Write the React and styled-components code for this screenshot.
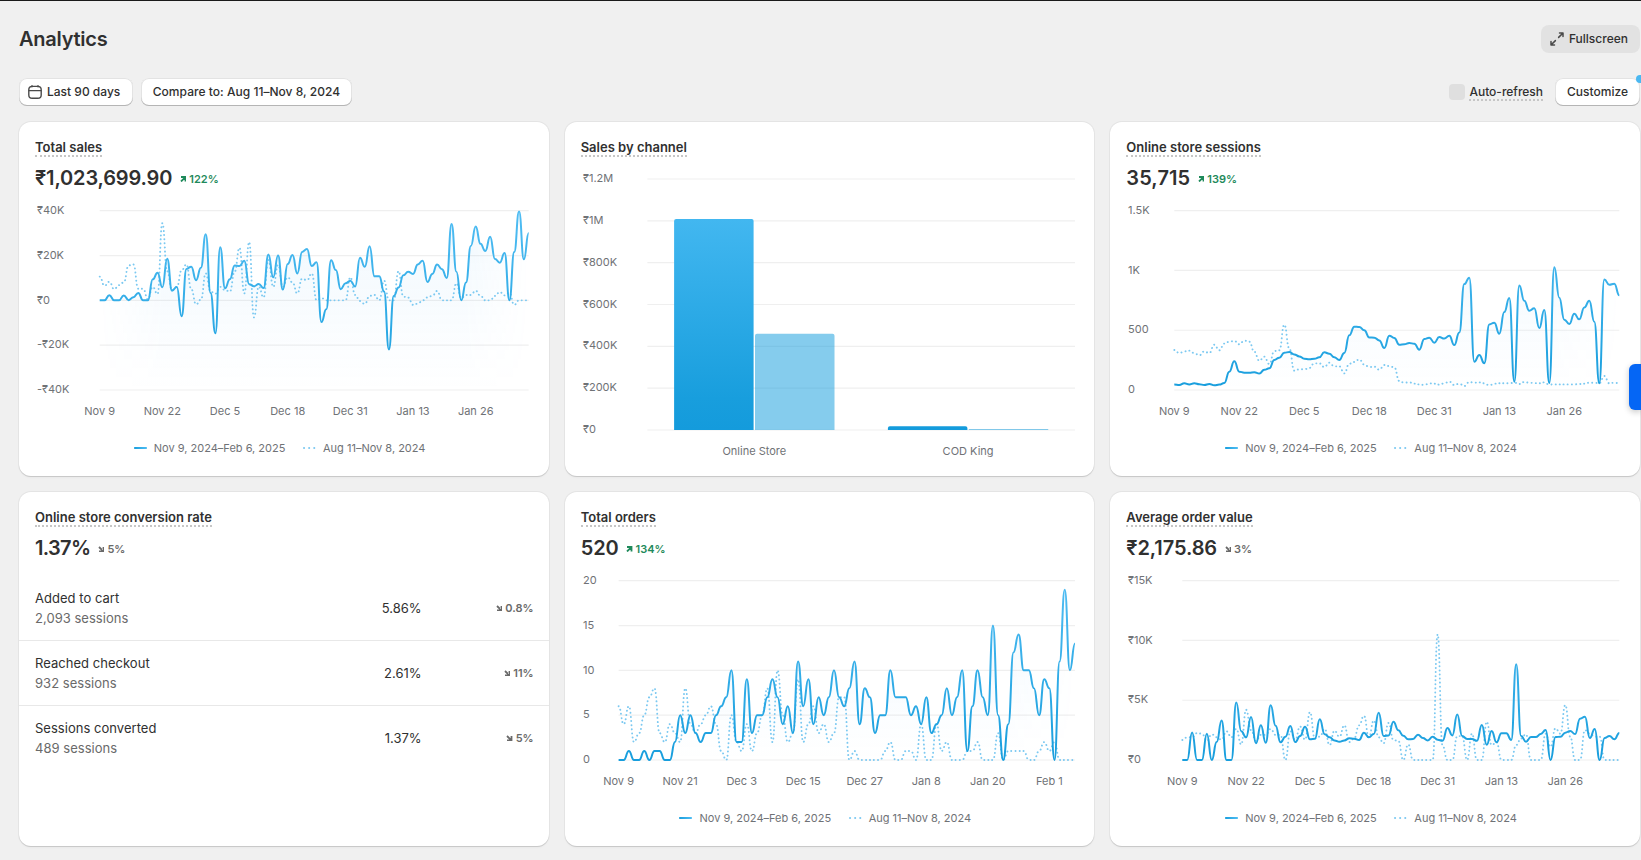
import React, { useId } from "react";
import styled, { createGlobalStyle } from "styled-components";

const GlobalStyle = createGlobalStyle`
  *, *::before, *::after { box-sizing: border-box; }
  body {
    margin: 0;
    background: #f0f0f0;
    color: #303030;
    font-family: Inter, "Liberation Sans", sans-serif;
    font-size: 13px;
    overflow: hidden;
  }
`;

/* ---------- data ---------- */

const SALES = [
  0, 0, 2.3, 0, 0, 2.2, 0.1, 1.4, 3.3, 0, 0, 9.4, 12.3, 5.8, 18.6, 4.3, 6, -7.1, 14, 15,
  9, 14.6, 29.5, 3.3, -14.7, 23.7, 5.4, 9.4, 15.6, 15.3, 17.7, 7.2, 6.3, 7.3, 5.5, 20.5, 10.3, 20, 4.8, 16.2,
  20.2, 12, 21.6, 22.9, 15.3, 17, -9.7, -4, 17.9, 13.5, 5, 7.6, 8.8, 6.2, 19, 15, 24.1, 10.7, 10.7, 3.9,
  -21.9, 1.9, 5.7, 11.2, 12.8, 11.8, 16, 17.7, 8.2, 11.8, 16, 13.9, 10, 34.1, 12.8, 0, 8, 24.3, 32.9, 25.2,
  22, 28.4, 18.5, 16.8, 21.1, 0, 21.6, 39.6, 18.3, 30,
];
const SALES_PREV = [
  10.6, 6.5, 8.3, 5, 6.8, 8, 15.6, 16, 5.2, 5.2, 0.5, 6, 2.8, 34.4, 13, 4.6, 6, 13.5, 16, 5,
  -1.8, 0.3, 12, 3.9, 3, 6, 4.6, 3.9, 12.8, 23.4, 3.1, 26, -7.6, 6.1, 1.3, 18, 6, 15.8, 6, 10.3,
  8, 3.1, 9.7, 9, 12, 0, 1, 0, 0, 0, 0, 0, 10.3, 2.4, -0.3, -1.6, 2, 2.4, 0, 8.8,
  0, 0, 13, 1.6, 1.2, -2, -1.5, 0, 1.3, 2, 4.2, 0, 0, 0, 7.6, 1, 2.4, 2.4, 4.3, 2,
  0, 0, 2, 3.7, 2.2, 3.4, -2, 0, 0, 0,
];
const SESSIONS = [
  45, 42, 56, 47, 56, 48, 42, 50, 39, 45, 58, 153, 240, 153, 145, 145, 148, 137, 170, 181,
  251, 270, 312, 318, 298, 281, 262, 257, 262, 273, 315, 304, 273, 251, 310, 457, 530, 527, 499, 440,
  438, 415, 351, 454, 435, 379, 382, 393, 387, 337, 427, 438, 396, 443, 430, 454, 376, 482, 886, 940,
  237, 293, 223, 549, 563, 471, 652, 770, 70, 875, 747, 663, 683, 518, 669, 58, 1026, 772, 588, 552,
  638, 591, 691, 747, 571, 56, 925, 881, 889, 792,
];
const SESSIONS_PREV = [
  335, 309, 323, 329, 309, 290, 323, 309, 379, 332, 388, 404, 410, 382, 413, 404, 320, 245, 279, 217,
  326, 332, 546, 348, 162, 173, 173, 184, 223, 223, 192, 229, 198, 198, 139, 220, 234, 256, 212, 192,
  195, 170, 209, 200, 190, 75, 61, 64, 53, 47, 42, 56, 53, 45, 56, 70, 42, 53, 33, 67,
  61, 64, 56, 39, 53, 56, 56, 56, 61, 50, 67, 61, 58, 56, 64, 45, 47, 47, 47, 47,
  47, 50, 53, 61, 61, 56, 117, 56, 61, 56,
];
const ORDERS = [
  0, 0, 1, 0, 0, 1, 0, 1, 1, 0, 0, 2, 5, 3, 5, 3, 2, 3, 3, 5,
  6, 7, 10, 2, 2, 9, 3, 5, 5, 7, 9, 7, 4, 6, 3, 11, 6, 9, 4, 7,
  5, 7, 10, 7, 6, 8, 11, 4, 8, 7, 3, 5, 5, 10, 7, 7, 7, 5, 6, 4,
  7, 3, 4, 5, 8, 5, 7, 10, 1, 6, 10, 7, 5, 15, 5, 0, 4, 12, 14, 10,
  10, 8, 5, 9, 8, 0, 11, 19, 10, 13,
];
const ORDERS_PREV = [
  6, 4, 6, 2, 3, 5, 7, 8, 3, 2, 4, 3, 2, 8, 4, 3, 4, 5, 6, 4,
  1, 0, 5, 2, 1, 4, 1, 3, 5, 8, 2, 10, 5, 2, 3, 9, 2, 4, 6, 3,
  4, 2, 3, 7, 7, 0, 1, 0, 0, 0, 0, 0, 1, 2, 0, 0, 1, 1, 0, 4,
  0, 0, 4, 1, 2, 0, 0, 0, 1, 1, 2, 0, 0, 0, 3, 0, 1, 1, 1, 1,
  0, 0, 1, 2, 1, 2, 0, 0, 0, 0,
];
const AOV = [
  0, 0, 2.3, 0, 0, 2.2, 0, 1.5, 3.3, 0, 0, 4.8, 2.4, 1.9, 3.6, 1.4, 2.9, 1.45, 4.57, 2.87,
  1.48, 1.95, 2.84, 1.5, 2, 2.79, 1.73, 1.78, 3.4, 2.15, 1.9, 1.64, 1.53, 1.64, 1.81, 1.78, 1.67, 2.29, 1.9, 2.17,
  3.96, 2, 2.06, 3.2, 2.48, 2.03, 1.73, 1.76, 2.12, 1.84, 1.64, 1.95, 1.7, 1.6, 2.68, 2.06, 3.8, 2, 1.76, 1.76,
  1.6, 2.93, 1.28, 2.43, 1.48, 2.23, 2.23, 1.67, 8, 2, 1.53, 1.92, 1.92, 2.17, 2.5, 0, 1.92, 1.95, 2.29, 2.43,
  2.17, 3.46, 3.62, 1.84, 2.6, 0, 1.84, 2, 1.73, 2.26,
];
const AOV_PREV = [
  1.67, 1.9, 1.9, 2.25, 2.2, 1.6, 2.15, 1.9, 1.7, 2.4, 1.9, 2.6, 1.3, 4.2, 2.5, 1.6, 2.1, 2.1, 2.6, 2.1,
  2.1, 0, 2.4, 1.7, 2.8, 1.7, 4, 1.8, 1.95, 2.6, 1.25, 2.45, 1.95, 2.9, 1.5, 1.8, 2.9, 3.7, 1.9, 3.3,
  1.9, 1.4, 3.1, 1.67, 1.6, 0, 1.3, 0, 0, 0, 0, 0, 10.5, 1.2, 0, 0, 2, 2, 0, 2.2,
  0, 0, 3.2, 1.25, 1.5, 0, 0, 0, 1.25, 1.8, 2.15, 0, 0, 0, 2.2, 1.1, 2.65, 2.2, 4.6, 1.95,
  0, 0, 2.5, 2.2, 1.95, 1.95, 0, 0, 0, 0,
];

const THIRTEEN_DAYS = ["Nov 9", "Nov 22", "Dec 5", "Dec 18", "Dec 31", "Jan 13", "Jan 26"];
const TWELVE_DAYS = ["Nov 9", "Nov 21", "Dec 3", "Dec 15", "Dec 27", "Jan 8", "Jan 20", "Feb 1"];

const FUNNEL = [
  { name: "Added to cart", sessions: "2,093 sessions", rate: "5.86%", change: "0.8%" },
  { name: "Reached checkout", sessions: "932 sessions", rate: "2.61%", change: "11%" },
  { name: "Sessions converted", sessions: "489 sessions", rate: "1.37%", change: "5%" },
];

/* ---------- page ---------- */

const Page = styled.div`
  height: 860px;
  border-top: 1px solid #1a1a1a;
  padding: 24px 1px 0 19px;
  overflow: hidden;
`;

const Header = styled.header`
  display: flex;
  align-items: center;
  justify-content: space-between;
  height: 28px;
`;

const PageTitle = styled.h1`
  margin: 0;
  font-size: 20px;
  line-height: 28px;
  font-weight: 630;
  letter-spacing: -0.25px;
`;

const Toolbar = styled.div`
  display: flex;
  align-items: center;
  justify-content: space-between;
  margin-top: 25px;
  height: 28px;
`;

const Group = styled.div`
  display: flex;
  align-items: center;
  gap: ${(p) => p.$gap}px;
`;

const Button = styled.button`
  position: relative;
  display: flex;
  align-items: center;
  gap: ${(p) => p.$gap || 0}px;
  height: 28px;
  margin: 0;
  padding: ${(p) => p.$padding || "0 12px"};
  border: 0;
  border-radius: 8px;
  background: ${(p) => (p.$muted ? "#e2e2e2" : "#fff")};
  box-shadow: ${(p) =>
    p.$muted ? "none" : "inset 0 -1px 0 #b5b5b5, inset 0 0 0 1px #e3e3e3"};
  color: #303030;
  font: 550 12px/16px Inter, "Liberation Sans", sans-serif;
  letter-spacing: ${(p) => p.$tracking || 0}px;
  white-space: nowrap;
`;

const Dot = styled.span`
  position: absolute;
  top: -3px;
  right: -4px;
  width: 8px;
  height: 8px;
  border-radius: 50%;
  background: #4ab8f1;
`;

const Checkbox = styled.span`
  width: 16px;
  height: 16px;
  border-radius: 4px;
  background: #dfdfdf;
`;

const DottedLabel = styled.span`
  border-bottom: 2px dotted #c6c6c6;
  font-size: ${(p) => p.$size || 13}px;
  font-weight: ${(p) => p.$weight || 450};
  line-height: 15px;
`;

const Grid = styled.main`
  display: grid;
  grid-template-columns: repeat(3, 1fr);
  grid-auto-rows: 354px;
  gap: 16px;
  margin-top: 16px;
`;

const Card = styled.section`
  display: flex;
  flex-direction: column;
  min-width: 0;
  border-radius: 12px;
  background: #fff;
  box-shadow: 0 1px 0 #c9c9c9, 0 0 0 1px #e4e4e4, 0 2px 2px rgba(0, 0, 0, 0.03);
`;

const CardHeader = styled.div`
  display: flex;
  flex-direction: column;
  align-items: flex-start;
  height: ${(p) => (p.$compact ? 42 : 74)}px;
  padding: 18px 16px 0;
`;

const Metric = styled.div`
  display: flex;
  align-items: center;
  gap: 7.5px;
  margin-top: 7px;
  height: 28px;
`;

const MetricValue = styled.span`
  font-size: 20px;
  font-weight: 580;
  line-height: 28px;
  letter-spacing: ${(p) => p.$tracking}px;
`;

const DeltaBox = styled.span`
  display: inline-flex;
  align-items: center;
  gap: 3px;
  padding-top: ${(p) => p.$drop || 0}px;
  color: ${(p) => (p.$up ? "#1f8a5b" : "#6a6a6a")};
  font-size: 11px;
  font-weight: ${(p) => (p.$up ? 620 : 580)};
  line-height: 16px;
`;

const ChartSvg = styled.svg`
  display: block;
  flex: none;
  width: 498px;
  height: ${(p) => p.height}px;
  margin-left: 16px;
  overflow: visible;
  text {
    fill: #6f7276;
    font-family: Inter, "Liberation Sans", sans-serif;
    font-size: 11px;
    font-weight: 400;
  }
`;

const Legend = styled.div`
  display: flex;
  justify-content: center;
  gap: 17.6px;
  padding-right: 8.4px;
  margin-top: 16px;
  color: #6f7276;
  font-size: 11px;
  line-height: 16px;
`;

const LegendItem = styled.span`
  display: flex;
  align-items: center;
  gap: 7px;
`;

const FunnelList = styled.div`
  display: flex;
  flex-direction: column;
  margin-top: 10px;
`;

const FunnelRow = styled.div`
  display: grid;
  grid-template-columns: 1fr 120px 112px;
  align-items: center;
  height: 65px;
  padding: 0 15px 0 16px;
  line-height: 20px;
  letter-spacing: 0.03px;
  border-bottom: 1px solid #e8e8e8;
  &:last-child { border-bottom-color: transparent; }
`;

const StepName = styled.div`
  color: #303030;
`;

const StepSessions = styled.div`
  color: #6a6a6a;
`;

const StepRate = styled.div`
  text-align: right;
`;

const StepChange = styled.div`
  display: flex;
  justify-content: flex-end;
`;

const SideTab = styled.div`
  position: fixed;
  right: 0;
  top: 364px;
  width: 12px;
  height: 46px;
  border-radius: 6px 0 0 6px;
  background: #0566f5;
  box-shadow: 0 2px 6px rgba(0, 0, 0, 0.22);
`;

/* ---------- icons ---------- */

function CalendarIcon() {
  return (
    <svg width="14" height="14" viewBox="0 0 14 14" fill="none" stroke="#4a4a4a" strokeWidth="1.4" strokeLinecap="round">
      <rect x="0.8" y="1.4" width="12.4" height="11.9" rx="3.4" />
      <path d="M1 5.6h12M4 0.7v1M10 0.7v1" />
    </svg>
  );
}

function ExpandIcon() {
  return (
    <svg width="14" height="14" viewBox="0 0 14 14" fill="none" stroke="#4a4a4a" strokeWidth="1.5" strokeLinecap="round" strokeLinejoin="round">
      <path d="M9.5 1h3.5v3.5M12.8 1.2 8.6 5.4M4.5 13H1V9.5M1.2 12.8l4.2-4.2" />
    </svg>
  );
}

function ArrowIcon({ up }) {
  return (
    <svg width="6.5" height="6.5" viewBox="0 0 6.5 6.5" fill="none" stroke="currentColor" strokeWidth="1.8">
      <path d={up ? "M1 1h4.5v4.6M5.2 1.3 1 5.5" : "M1 5.5h4.5V0.9M5.2 5.2 1 1"} />
    </svg>
  );
}

function Delta({ up, drop, children }) {
  return (
    <DeltaBox $up={up} $drop={drop}>
      <ArrowIcon up={up} />
      {children}
    </DeltaBox>
  );
}

/* ---------- charts ---------- */

const PLOT_TOP = 14.7;
const PLOT_BOTTOM = 194;

function curve(points) {
  return points
    .map(([x, y], i) => {
      if (i === 0) return `M${x.toFixed(2)},${y.toFixed(2)}`;
      const [px, py] = points[i - 1];
      const mid = ((px + x) / 2).toFixed(2);
      return `C${mid},${py.toFixed(2)} ${mid},${y.toFixed(2)} ${x.toFixed(2)},${y.toFixed(2)}`;
    })
    .join("");
}

function LineChart({ current, previous, min = 0, max, left, right = 493.7, yLabels, xLabels, every }) {
  const id = useId();
  const step = (right - left) / (current.length - 1);
  const y = (v) => PLOT_BOTTOM - ((v - min) / (max - min)) * (PLOT_BOTTOM - PLOT_TOP);
  const toPoints = (data) => data.map((v, i) => [left + i * step, y(v)]);
  const line = curve(toPoints(current));
  const gap = (PLOT_BOTTOM - PLOT_TOP) / (yLabels.length - 1);

  return (
    <ChartSvg height={228}>
      <defs>
        <linearGradient id={`${id}l`} gradientUnits="userSpaceOnUse" x1="0" x2="0" y1={PLOT_BOTTOM} y2={PLOT_TOP}>
          <stop offset="0" stopColor="#189edd" />
          <stop offset="1" stopColor="#50bdf3" />
        </linearGradient>
        <linearGradient id={`${id}a`} gradientUnits="userSpaceOnUse" x1="0" x2="0" y1={PLOT_TOP} y2={PLOT_BOTTOM}>
          <stop offset="0" stopColor="#41a4ee" stopOpacity="0.08" />
          <stop offset="1" stopColor="#41a4ee" stopOpacity="0" />
        </linearGradient>
        <linearGradient id={`${id}f`} gradientUnits="userSpaceOnUse" x1={left} x2={right} y1="0" y2="0">
          <stop offset="0" stopColor="#fff" stopOpacity="0" />
          <stop offset="0.15" stopColor="#fff" />
          <stop offset="0.85" stopColor="#fff" />
          <stop offset="1" stopColor="#fff" stopOpacity="0" />
        </linearGradient>
        <mask id={`${id}m`} maskUnits="userSpaceOnUse" x="0" y="0" width="498" height="228">
          <rect width="498" height="228" fill={`url(#${id}f)`} />
        </mask>
      </defs>
      {yLabels.map((label, i) => (
        <g key={label}>
          <line x1={left} x2={right} y1={PLOT_TOP + i * gap} y2={PLOT_TOP + i * gap} stroke="#efefef" strokeWidth="1.2" />
          <text x="2" y={PLOT_TOP + i * gap + 3.2}>{label}</text>
        </g>
      ))}
      {xLabels.map((label, i) => (
        <text key={label} x={left + i * every * step} y={218.5} textAnchor="middle">{label}</text>
      ))}
      <path d={`${line}V${PLOT_BOTTOM}H${left}Z`} fill={`url(#${id}a)`} mask={`url(#${id}m)`} />
      <path d={curve(toPoints(previous))} fill="none" stroke="#7cc9f1" strokeWidth="1.9" strokeLinecap="round" strokeDasharray="0.1 4" />
      <path d={line} fill="none" stroke={`url(#${id}l)`} strokeWidth="2" strokeLinejoin="round" />
    </ChartSvg>
  );
}

function ChartLegend() {
  const id = useId();
  return (
    <Legend>
      <LegendItem>
        <svg width="13" height="2" viewBox="0 0 13 2">
          <defs>
            <linearGradient id={id}>
              <stop offset="0" stopColor="#189edd" />
              <stop offset="1" stopColor="#50bdf3" />
            </linearGradient>
          </defs>
          <rect width="13" height="2" rx="0.8" fill={`url(#${id})`} />
        </svg>
        Nov 9, 2024–Feb 6, 2025
      </LegendItem>
      <LegendItem>
        <svg width="13" height="2" viewBox="0 0 13 2">
          <path d="M1 1H13" stroke="#7cc9f1" strokeWidth="2" strokeLinecap="round" strokeDasharray="0.1 5" />
        </svg>
        Aug 11–Nov 8, 2024
      </LegendItem>
    </Legend>
  );
}

const BAR_LABELS = ["₹1.2M", "₹1M", "₹800K", "₹600K", "₹400K", "₹200K", "₹0"];
const CHANNELS = [
  { name: "Online Store", current: 1009000, previous: 460000 },
  { name: "COD King", current: 18500, previous: 4800 },
];

function BarChart() {
  const top = 15;
  const bottom = 266;
  const left = 66.4;
  const right = 494;
  const band = (right - left) / CHANNELS.length;
  const h = (v) => (v / 1200000) * (bottom - top);
  const bar = (x, w, v) => {
    const height = h(v);
    const r = Math.min(2, height / 2);
    return `M${x},${bottom}v${-(height - r)}q0,${-r} ${r},${-r}h${w - 2 * r}q${r},0 ${r},${r}v${height - r}z`;
  };
  return (
    <ChartSvg height={300}>
      <defs>
        <linearGradient id="bar" gradientUnits="userSpaceOnUse" x1="0" x2="0" y1={bottom} y2={55}>
          <stop offset="0" stopColor="#149bdc" />
          <stop offset="0.15" stopColor="#189edd" />
          <stop offset="1" stopColor="#42b7f0" />
        </linearGradient>
      </defs>
      {BAR_LABELS.map((label, i) => {
        const y = top + (i * (bottom - top)) / 6;
        return (
          <g key={label}>
            <line x1={left} x2={right} y1={y} y2={y} stroke="#efefef" strokeWidth="1.2" />
            <text x="2" y={y + 3}>{label}</text>
          </g>
        );
      })}
      {CHANNELS.map((c, i) => {
        const center = left + band * (i + 0.5);
        return (
          <g key={c.name}>
            <path d={bar(center - 80.2, 79.5, c.current)} fill="url(#bar)" />
            <path d={bar(center + 0.7, 79.5, c.previous)} fill="#189edd" fillOpacity="0.53" />
            <text x={center} y="290.5" textAnchor="middle">{c.name}</text>
          </g>
        );
      })}
    </ChartSvg>
  );
}

/* ---------- cards ---------- */

function MetricHeader({ title, value, delta, up, tracking = -0.1 }) {
  return (
    <CardHeader $compact={!value}>
      <DottedLabel $weight={600}>{title}</DottedLabel>
      {value && (
        <Metric>
          <MetricValue $tracking={tracking}>{value}</MetricValue>
          <Delta up={up} drop={2}>{delta}</Delta>
        </Metric>
      )}
    </CardHeader>
  );
}

function LineCard({ title, value, delta, up, tracking, ...chart }) {
  return (
    <Card>
      <MetricHeader title={title} value={value} delta={delta} up={up} tracking={tracking} />
      <LineChart {...chart} />
      <ChartLegend />
    </Card>
  );
}

export default function App() {
  return (
    <>
      <GlobalStyle />
      <Page>
        <Header>
          <PageTitle>Analytics</PageTitle>
          <Button $muted $gap={5} $padding="0 12px 0 9px">
            <ExpandIcon />
            Fullscreen
          </Button>
        </Header>
        <Toolbar>
          <Group $gap={8}>
            <Button $gap={5} $padding="0 12.5px 0 9px">
              <CalendarIcon />
              Last 90 days
            </Button>
            <Button $tracking={0.03}>Compare to: Aug 11–Nov 8, 2024</Button>
          </Group>
          <Group $gap={12}>
            <Group $gap={4}>
              <Checkbox />
              <DottedLabel $size={12}>Auto-refresh</DottedLabel>
            </Group>
            <Button>
              Customize
              <Dot />
            </Button>
          </Group>
        </Toolbar>
        <Grid>
          <LineCard
            title="Total sales" value="₹1,023,699.90" delta="122%" up tracking={-0.15}
            current={SALES} previous={SALES_PREV} min={-40} max={40} left={64.7}
            yLabels={["₹40K", "₹20K", "₹0", "-₹20K", "-₹40K"]} xLabels={THIRTEEN_DAYS} every={13}
          />
          <Card>
            <MetricHeader title="Sales by channel" />
            <BarChart />
          </Card>
          <LineCard
            title="Online store sessions" value="35,715" delta="139%" up tracking={0.1}
            current={SESSIONS} previous={SESSIONS_PREV} max={1500} left={48.3} right={493.3}
            yLabels={["1.5K", "1K", "500", "0"]} xLabels={THIRTEEN_DAYS} every={13}
          />
          <Card>
            <MetricHeader title="Online store conversion rate" value="1.37%" delta="5%" tracking={-0.65} />
            <FunnelList>
              {FUNNEL.map((row) => (
                <FunnelRow key={row.name}>
                  <div>
                    <StepName>{row.name}</StepName>
                    <StepSessions>{row.sessions}</StepSessions>
                  </div>
                  <StepRate>{row.rate}</StepRate>
                  <StepChange>
                    <Delta>{row.change}</Delta>
                  </StepChange>
                </FunnelRow>
              ))}
            </FunnelList>
          </Card>
          <LineCard
            title="Total orders" value="520" delta="134%" up
            current={ORDERS} previous={ORDERS_PREV} max={20} left={37.6} right={494}
            yLabels={["20", "15", "10", "5", "0"]} xLabels={TWELVE_DAYS} every={12}
          />
          <LineCard
            title="Average order value" value="₹2,175.86" delta="3%"
            current={AOV} previous={AOV_PREV} max={15} left={56.3} right={493.3}
            yLabels={["₹15K", "₹10K", "₹5K", "₹0"]} xLabels={THIRTEEN_DAYS} every={13}
          />
        </Grid>
      </Page>
      <SideTab />
    </>
  );
}
